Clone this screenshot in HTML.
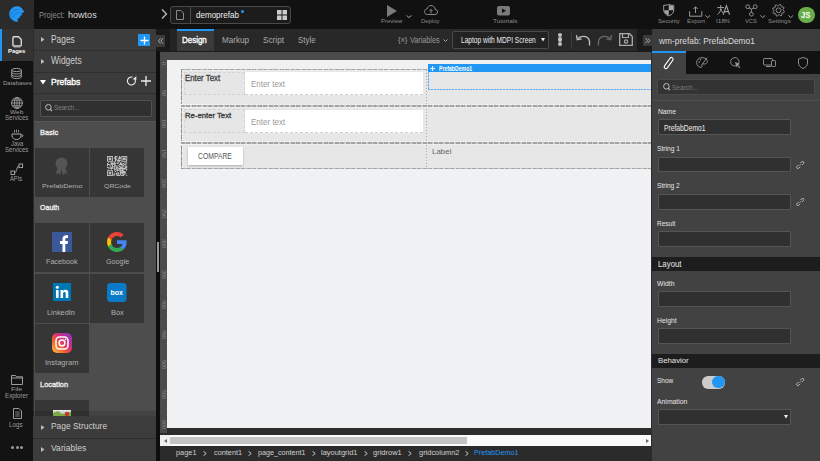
<!DOCTYPE html>
<html><head><meta charset="utf-8">
<style>
*{margin:0;padding:0;box-sizing:border-box}
html,body{width:820px;height:461px;overflow:hidden;background:#2a2a2a;font-family:"Liberation Sans",sans-serif}
.a{position:absolute}
.t{position:absolute;white-space:nowrap;line-height:1;transform-origin:0 0}
svg{position:absolute;overflow:visible}
</style></head><body>
<div class="a" style="left:0px;top:0px;width:820px;height:29px;background:#111;"></div>
<div class="a" style="left:0px;top:0px;width:34px;height:29px;background:#2b2b2b;"></div>
<svg style="left:0;top:0" width="30" height="28" viewBox="0 0 30 28">
  <path d="M17.5 21.9 C12.5 21.6 9.3 18 9.3 14 C9.3 9.5 13 6.3 17 6.3 C20 6.3 22.6 8 24.2 12.2 L21.4 13.2 L22.3 14.9 L19.7 15.9 L20.4 17.2 L17.7 18.7 Z" fill="#2196f3"/>
  <path d="M11 15.5 C11.5 11.5 15 9 19 9.5 M12.5 18 C13.5 14.5 16.5 12.5 19.8 12.8" fill="none" stroke="#1a78c8" stroke-width="0.9"/>
</svg>
<svg style="left:161px;top:9px" width="7" height="10" viewBox="0 0 7 10"><path d="M1 0.5 L5.5 5 L1 9.5" fill="none" stroke="#bbb" stroke-width="1.3"/></svg>
<div class="a" style="left:170px;top:6px;width:121px;height:18px;background:#1c1c1c;border:1px solid #4a4a4a;border-radius:3px"></div>
<div class="a" style="left:190px;top:7px;width:1px;height:16px;background:#4a4a4a;"></div>
<svg style="left:176px;top:10px" width="8" height="10" viewBox="0 0 8 10"><path d="M0.5 0.5 H5 L7.5 3 V9.5 H0.5 Z" fill="none" stroke="#888" stroke-width="1"/></svg>
<div class="a" style="left:241px;top:10px;width:3px;height:3px;background:#2196f3;border-radius:50%"></div>
<svg style="left:277px;top:10px" width="10" height="10" viewBox="0 0 10 10"><rect x="0" y="0" width="4.5" height="4.5" fill="#ccc"/><rect x="5.5" y="0" width="4.5" height="4.5" fill="#ccc"/><rect x="0" y="5.5" width="4.5" height="4.5" fill="#ccc"/><rect x="5.5" y="5.5" width="4.5" height="4.5" fill="#ccc"/></svg>
<svg style="left:387px;top:5px" width="10" height="12" viewBox="0 0 10 12"><path d="M0 0 L10 6 L0 12Z" fill="#7a7a7a"/></svg>
<svg style="left:406px;top:15px" width="6" height="3" viewBox="0 0 6 3"><path d="M0.5 0.5 L3 2.5 L5.5 0.5" fill="none" stroke="#999" stroke-width="1"/></svg>
<svg style="left:424px;top:5px" width="14" height="10" viewBox="0 0 14 10"><path d="M3.5 9.5 C1 9.5 0.5 7.5 0.5 6.5 C0.5 5 1.8 4 3 4 C3.2 2 5 0.5 7 0.5 C9.5 0.5 11 2.5 11 4.3 C12.5 4.3 13.5 5.5 13.5 7 C13.5 8.5 12.5 9.5 11 9.5 Z" fill="none" stroke="#8a8a8a" stroke-width="1"/><path d="M7 8.5 V4.5 M5.5 6 L7 4.5 L8.5 6" fill="none" stroke="#8a8a8a" stroke-width="1"/></svg>
<svg style="left:497px;top:6px" width="13" height="10" viewBox="0 0 13 10"><rect x="0" y="0" width="13" height="9.5" rx="2" fill="#7a7a7a"/><path d="M5 2.5 L9 4.75 L5 7Z" fill="#111"/></svg>
<svg style="left:662.5px;top:4.3px" width="11.5" height="12.5" viewBox="0 0 11.5 12.5"><path d="M0.7 1.2 C2.5 1.5 4 1 5.75 0.5 C7.5 1 9 1.5 10.8 1.2 V6 C10.8 9 8.5 11 5.75 11.9 C3 11 0.7 9 0.7 6Z" fill="none" stroke="#9a9a9a" stroke-width="1"/><path d="M5.75 0.9 C7.5 1.3 9 1.8 10.3 1.7 V6.2 H5.75Z M5.75 6.2 V11.4 C3.3 10.5 1.3 8.8 1.2 6.2Z" fill="#a8a8a8"/></svg>
<svg style="left:689px;top:5.5px" width="13.5" height="11" viewBox="0 0 13.5 11"><path d="M0.6 5.2 V10.2 H12.8 V5.2" fill="none" stroke="#9a9a9a" stroke-width="1"/><path d="M6.5 7 V0.8 M4.3 3 L6.5 0.8 L8.7 3" fill="none" stroke="#9a9a9a" stroke-width="1"/></svg>
<svg style="left:704.5px;top:14.6px" width="5.5" height="3" viewBox="0 0 5.5 3"><path d="M0.4 0.4 L2.75 2.6 L5.1 0.4" fill="none" stroke="#aaa" stroke-width="0.9"/></svg>
<svg style="left:716.8px;top:5.2px" width="13" height="10" viewBox="0 0 13 10"><path d="M0.3 2.6 H7 M3.7 0 V3.5 C3.7 6 2.5 8 0.5 9.5 M3.9 4 C4.8 6.5 5.6 7.8 7 9" fill="none" stroke="#a0a0a0" stroke-width="1"/><path d="M6.2 9.8 L9.4 0.6 L12.6 9.8 M7.5 6.6 H11.3" fill="none" stroke="#a0a0a0" stroke-width="1.1"/></svg>
<svg style="left:744.5px;top:3.8px" width="13" height="13" viewBox="0 0 13 13"><circle cx="2.7" cy="2.7" r="1.9" fill="none" stroke="#9a9a9a" stroke-width="0.9"/><circle cx="10.2" cy="2.7" r="1.9" fill="none" stroke="#9a9a9a" stroke-width="0.9"/><circle cx="6.4" cy="10.2" r="1.9" fill="none" stroke="#9a9a9a" stroke-width="0.9"/><path d="M4 4 L6.4 5.1 L8.9 4 M6.4 5.1 V8.3" fill="none" stroke="#9a9a9a" stroke-width="0.9"/></svg>
<svg style="left:759.8px;top:14.7px" width="5.5" height="3" viewBox="0 0 5.5 3"><path d="M0.4 0.4 L2.75 2.6 L5.1 0.4" fill="none" stroke="#aaa" stroke-width="0.9"/></svg>
<svg style="left:772.1px;top:3.9px" width="13" height="12.6" viewBox="0 0 13 12.6"><path d="M11.10 6.30 L12.38 7.47 L12.04 8.60 L10.32 8.86 L9.75 9.55 L9.83 11.29 L8.80 11.84 L7.40 10.81 L6.50 10.90 L5.33 12.18 L4.20 11.84 L3.94 10.12 L3.25 9.55 L1.51 9.63 L0.96 8.60 L1.99 7.20 L1.90 6.30 L0.62 5.13 L0.96 4.00 L2.68 3.74 L3.25 3.05 L3.17 1.31 L4.20 0.76 L5.60 1.79 L6.50 1.70 L7.67 0.42 L8.80 0.76 L9.06 2.48 L9.75 3.05 L11.49 2.97 L12.04 4.00 L11.01 5.40 Z" fill="none" stroke="#9a9a9a" stroke-width="0.9" stroke-linejoin="round"/><circle cx="6.5" cy="6.3" r="2.4" fill="none" stroke="#9a9a9a" stroke-width="0.9"/></svg>
<svg style="left:787.5px;top:14.7px" width="5.5" height="3" viewBox="0 0 5.5 3"><path d="M0.4 0.4 L2.75 2.6 L5.1 0.4" fill="none" stroke="#aaa" stroke-width="0.9"/></svg>
<div class="a" style="left:798.3px;top:6.5px;width:16.5px;height:16.5px;background:#68ad47;border-radius:50%"></div>
<div class="a" style="left:0px;top:29px;width:33px;height:432px;background:#131313;"></div>
<div class="a" style="left:0px;top:29px;width:33px;height:32px;background:#333;"></div>
<div class="a" style="left:0px;top:29px;width:2px;height:32px;background:#2196f3;"></div>
<div class="a" style="left:33px;top:29px;width:123px;height:432px;background:#4d4d4d;"></div>
<div class="a" style="left:33px;top:29px;width:123px;height:92px;background:#3b3b3b;"></div>
<div class="a" style="left:33px;top:50px;width:123px;height:1px;background:#2f2f2f;"></div>
<div class="a" style="left:33px;top:72px;width:123px;height:1px;background:#2f2f2f;"></div>
<div class="a" style="left:33px;top:93px;width:123px;height:1px;background:#2f2f2f;"></div>
<div class="a" style="left:33px;top:121px;width:123px;height:1px;background:#555;"></div>
<div class="a" style="left:156px;top:51px;width:4px;height:410px;background:#0e0e0e;"></div>
<div class="a" style="left:33px;top:29px;width:1px;height:386.6px;background:#2c2c2c;"></div>
<div class="a" style="left:156px;top:29px;width:496px;height:22px;background:#282828;"></div>
<div class="a" style="left:156px;top:29px;width:14px;height:22px;background:#1a1a1a;"></div>
<div class="a" style="left:170px;top:29px;width:7px;height:22px;background:#242424;"></div>
<div class="a" style="left:177px;top:29px;width:37px;height:22px;background:#3a3a3a;border-top:2px solid #2196f3"></div>
<div class="t" style="left:398px;top:35.5px;font-size:8px;color:#999">{x}</div>
<svg style="left:443px;top:39px" width="5" height="3" viewBox="0 0 5 3"><path d="M0.5 0.5 L2.5 2.5 L4.5 0.5" fill="none" stroke="#aaa" stroke-width="1"/></svg>
<div class="a" style="left:452px;top:31px;width:97px;height:18px;background:#222222;border:1px solid #4a4a4a;border-radius:2px"></div>
<svg style="left:541px;top:38px" width="4" height="4" viewBox="0 0 4 4"><path d="M0 0 H4 L2 3.6Z" fill="#eee"/></svg>
<div class="a" style="left:558px;top:33px;width:4.3px;height:4.3px;background:#c0c0c0;border-radius:50%"></div>
<div class="a" style="left:558px;top:37.3px;width:4.3px;height:4.3px;background:#c0c0c0;border-radius:50%"></div>
<div class="a" style="left:558px;top:41.6px;width:4.3px;height:4.3px;background:#c0c0c0;border-radius:50%"></div>
<div class="a" style="left:570.7px;top:31px;width:1px;height:18px;background:#3c3c3c;"></div>
<svg style="left:576px;top:34px" width="15" height="12" viewBox="0 0 15 12"><path d="M2 4.5 C5 1.5 11 1.5 13 5.5 C13.8 7.5 13.8 9.5 13.5 11.5" fill="none" stroke="#bbb" stroke-width="1.4"/><path d="M1 1 V5.5 H5.5" fill="none" stroke="#bbb" stroke-width="1.4" transform="rotate(-10 2 4)"/></svg>
<svg style="left:597px;top:34px" width="15" height="12" viewBox="0 0 15 12"><path d="M13 4.5 C10 1.5 4 1.5 2 5.5 C1.2 7.5 1.2 9.5 1.5 11.5" fill="none" stroke="#666" stroke-width="1.4"/><path d="M14 1 V5.5 H9.5" fill="none" stroke="#666" stroke-width="1.4" transform="rotate(10 13 4)"/></svg>
<svg style="left:619px;top:33px" width="14" height="13" viewBox="0 0 14 13"><path d="M0.7 0.7 H10.5 L13.3 3.5 V12.3 H0.7Z" fill="none" stroke="#aaa" stroke-width="1.3"/><path d="M3.5 0.7 V4.5 H9.5 V0.7" fill="none" stroke="#aaa" stroke-width="1.2"/><circle cx="7" cy="8.5" r="1.6" fill="none" stroke="#aaa" stroke-width="1.2"/></svg>
<div class="a" style="left:637px;top:29px;width:15px;height:22px;background:#1a1a1a;"></div>
<div class="a" style="left:642.8px;top:35px;width:9.5px;height:10.9px;background:#3a3a3a;"></div>
<svg style="left:645px;top:37.8px" width="5.5" height="5.4" viewBox="0 0 5.5 5.4"><path d="M0.4 0.3 L2.6 2.7 L0.4 5.1 M2.8 0.3 L5 2.7 L2.8 5.1" fill="none" stroke="#b0b0b0" stroke-width="0.9"/></svg>
<div class="a" style="left:160px;top:51px;width:492px;height:395px;background:#2c2c2c;"></div>
<div class="a" style="left:160px;top:51px;width:492px;height:1px;background:#1c1c1c;"></div>
<div class="a" style="left:160px;top:52px;width:491px;height:8px;background:#4b4b4b;"></div>
<div class="a" style="left:160px;top:52px;width:7px;height:381px;background:#4b4b4b;"></div>
<div class="a" style="left:167px;top:60px;width:484px;height:368px;background:#f0f1f2;"></div>
<div class="a" style="left:652px;top:29px;width:168px;height:432px;background:#424242;"></div>
<div class="a" style="left:156px;top:35px;width:8.9px;height:11.8px;background:#3a3a3a;"></div>
<svg style="left:157.6px;top:37.7px" width="5.5" height="6" viewBox="0 0 5.5 6"><path d="M2.6 0.3 L0.4 3 L2.6 5.7 M5.1 0.3 L2.9 3 L5.1 5.7" fill="none" stroke="#b0b0b0" stroke-width="0.9"/></svg>
<svg style="left:11.8px;top:36.2px" width="10.2" height="11.5" viewBox="0 0 10.2 11.5"><path d="M2 0.8 H6.5 L9.3 3.6 V9 C9.3 9.6 8.9 10 8.3 10 H2 C1.4 10 0.9 9.6 0.9 9 V1.9 C0.9 1.3 1.4 0.8 2 0.8Z" fill="none" stroke="#d8d8d8" stroke-width="1.4"/><path d="M1.8 11 H8.5" stroke="#bbb" stroke-width="0.9"/></svg>
<svg style="left:11px;top:68px" width="11" height="11" viewBox="0 0 11 11"><ellipse cx="5.5" cy="2" rx="4.8" ry="1.6" fill="none" stroke="#ababab" stroke-width="0.9"/><path d="M0.7 2 V9 C0.7 10 3 10.6 5.5 10.6 C8 10.6 10.3 10 10.3 9 V2 M0.7 4.4 C0.7 5.4 3 6 5.5 6 C8 6 10.3 5.4 10.3 4.4 M0.7 6.8 C0.7 7.8 3 8.4 5.5 8.4 C8 8.4 10.3 7.8 10.3 6.8" fill="none" stroke="#ababab" stroke-width="0.9"/></svg>
<svg style="left:11px;top:96.5px" width="12" height="12" viewBox="0 0 12 12"><circle cx="6" cy="6" r="5.4" fill="none" stroke="#ababab" stroke-width="0.9"/><ellipse cx="6" cy="6" rx="2.5" ry="5.4" fill="none" stroke="#ababab" stroke-width="0.8"/><path d="M0.6 6 H11.4 M1.5 3.2 H10.5 M1.5 8.8 H10.5 M6 0.6 V11.4" stroke="#ababab" stroke-width="0.8"/></svg>
<svg style="left:10.5px;top:129px" width="13" height="11" viewBox="0 0 13 11"><path d="M1 5 H10 V6.5 C10 9 8 10.5 5.5 10.5 C3 10.5 1 9 1 6.5Z" fill="none" stroke="#ababab" stroke-width="1"/><path d="M10 5.8 H11.3 C12.2 5.8 12.3 7.8 10.5 8" fill="none" stroke="#ababab" stroke-width="0.9"/><path d="M3.5 3.5 V1 M5.5 3.5 V0.5 M7.5 3.5 V1" stroke="#ababab" stroke-width="0.8"/></svg>
<svg style="left:0px;top:160px" width="34" height="20" viewBox="0 160 34 20"><rect x="11" y="171" width="3.6" height="3.6" fill="none" stroke="#ababab" stroke-width="0.9"/><rect x="19" y="164" width="3.6" height="3.6" fill="none" stroke="#ababab" stroke-width="0.9"/><path d="M14.6 172.8 C16.8 172.8 16.8 165.8 19 165.8" fill="none" stroke="#ababab" stroke-width="0.9"/></svg>
<svg style="left:11px;top:375px" width="12" height="10" viewBox="0 0 12 10"><path d="M0.5 0.5 H4.5 L5.5 1.8 H11.5 V9.5 H0.5Z M0.5 3 H11.5" fill="none" stroke="#ababab" stroke-width="0.9"/></svg>
<svg style="left:12.5px;top:408px" width="9" height="11" viewBox="0 0 9 11"><path d="M0.5 0.5 H6 L8.5 3 V10.5 H0.5Z" fill="none" stroke="#ababab" stroke-width="0.9"/><path d="M2.2 4 H6.8 M2.2 6 H6.8 M2.2 8 H6.8" stroke="#ababab" stroke-width="0.7"/></svg>
<div class="a" style="left:11px;top:446.2px;width:3px;height:3px;background:#9a9a9a;border-radius:50%"></div>
<div class="a" style="left:15.5px;top:446.2px;width:3px;height:3px;background:#9a9a9a;border-radius:50%"></div>
<div class="a" style="left:20px;top:446.2px;width:3px;height:3px;background:#9a9a9a;border-radius:50%"></div>
<svg style="left:41px;top:36.5px" width="4" height="5" viewBox="0 0 4 5"><path d="M0 0 L3.5 2.5 L0 5Z" fill="#bbb"/></svg>
<svg style="left:41px;top:58.5px" width="4" height="5" viewBox="0 0 4 5"><path d="M0 0 L3.5 2.5 L0 5Z" fill="#bbb"/></svg>
<svg style="left:40px;top:80px" width="6" height="5" viewBox="0 0 6 5"><path d="M0 0 H6 L3 4.5Z" fill="#fff"/></svg>
<div class="a" style="left:137.6px;top:33.8px;width:12.4px;height:12.4px;background:#2196f3;"></div>
<svg style="left:139.5px;top:35.7px" width="9" height="9" viewBox="0 0 9 9"><path d="M4.5 0.5 V8.5 M0.5 4.5 H8.5" stroke="#fff" stroke-width="1.3"/></svg>
<svg style="left:120px;top:70px" width="36" height="20" viewBox="120 70 36 20"><path d="M135.16 79.63 A4 4 0 1 1 132.44 77.14" fill="none" stroke="#eee" stroke-width="1.1"/><path d="M132.6 79.3 L136.3 76.2 L136.3 80Z" fill="#eee"/></svg>
<svg style="left:141px;top:76.3px" width="10" height="10" viewBox="0 0 10 10"><path d="M5 0 V10 M0 5 H10" stroke="#eee" stroke-width="1.3"/></svg>
<div class="a" style="left:39.5px;top:99.5px;width:112.5px;height:17.2px;background:#303030;border:1px solid #525252;border-radius:2px"></div>
<svg style="left:44.6px;top:104.2px" width="8" height="7.5" viewBox="0 0 8 7.5"><circle cx="3.4" cy="3.3" r="2.8" fill="none" stroke="#c0c0c0" stroke-width="1"/><path d="M5.3 5.3 L7 7" stroke="#c0c0c0" stroke-width="1.1"/></svg>
<div class="a" style="left:35px;top:148px;width:54px;height:49px;background:#363636;"></div>
<div class="a" style="left:90.3px;top:148px;width:53.7px;height:49px;background:#363636;"></div>
<div class="a" style="left:35px;top:223.2px;width:54px;height:49.3px;background:#363636;"></div>
<div class="a" style="left:90.3px;top:223.2px;width:53.7px;height:49.3px;background:#363636;"></div>
<div class="a" style="left:35px;top:273.6px;width:54px;height:49px;background:#363636;"></div>
<div class="a" style="left:90.3px;top:273.6px;width:53.7px;height:49px;background:#363636;"></div>
<div class="a" style="left:35px;top:323.8px;width:54px;height:49.2px;background:#363636;"></div>
<div class="a" style="left:35px;top:400px;width:54px;height:16px;background:#363636;"></div>
<svg style="left:54px;top:157px" width="15" height="19" viewBox="0 0 15 19"><path d="M4 10 L1.5 17 L4.5 16 L6 18.5 L7.5 12 M11 10 L13.5 17 L10.5 16 L9 18.5 L7.5 12" fill="#555"/><circle cx="7.5" cy="6.5" r="6" fill="#555"/></svg>
<svg style="left:106.6px;top:156px" width="20.3" height="20" viewBox="0 0 25 25"><g fill="#f2f2f2"><rect x="0" y="0" width="1.02" height="1.02"/><rect x="1" y="0" width="1.02" height="1.02"/><rect x="2" y="0" width="1.02" height="1.02"/><rect x="3" y="0" width="1.02" height="1.02"/><rect x="4" y="0" width="1.02" height="1.02"/><rect x="5" y="0" width="1.02" height="1.02"/><rect x="6" y="0" width="1.02" height="1.02"/><rect x="10" y="0" width="1.02" height="1.02"/><rect x="11" y="0" width="1.02" height="1.02"/><rect x="12" y="0" width="1.02" height="1.02"/><rect x="15" y="0" width="1.02" height="1.02"/><rect x="18" y="0" width="1.02" height="1.02"/><rect x="19" y="0" width="1.02" height="1.02"/><rect x="20" y="0" width="1.02" height="1.02"/><rect x="21" y="0" width="1.02" height="1.02"/><rect x="22" y="0" width="1.02" height="1.02"/><rect x="23" y="0" width="1.02" height="1.02"/><rect x="24" y="0" width="1.02" height="1.02"/><rect x="0" y="1" width="1.02" height="1.02"/><rect x="6" y="1" width="1.02" height="1.02"/><rect x="9" y="1" width="1.02" height="1.02"/><rect x="10" y="1" width="1.02" height="1.02"/><rect x="15" y="1" width="1.02" height="1.02"/><rect x="16" y="1" width="1.02" height="1.02"/><rect x="18" y="1" width="1.02" height="1.02"/><rect x="24" y="1" width="1.02" height="1.02"/><rect x="0" y="2" width="1.02" height="1.02"/><rect x="2" y="2" width="1.02" height="1.02"/><rect x="3" y="2" width="1.02" height="1.02"/><rect x="4" y="2" width="1.02" height="1.02"/><rect x="6" y="2" width="1.02" height="1.02"/><rect x="9" y="2" width="1.02" height="1.02"/><rect x="10" y="2" width="1.02" height="1.02"/><rect x="11" y="2" width="1.02" height="1.02"/><rect x="14" y="2" width="1.02" height="1.02"/><rect x="15" y="2" width="1.02" height="1.02"/><rect x="16" y="2" width="1.02" height="1.02"/><rect x="18" y="2" width="1.02" height="1.02"/><rect x="20" y="2" width="1.02" height="1.02"/><rect x="21" y="2" width="1.02" height="1.02"/><rect x="22" y="2" width="1.02" height="1.02"/><rect x="24" y="2" width="1.02" height="1.02"/><rect x="0" y="3" width="1.02" height="1.02"/><rect x="2" y="3" width="1.02" height="1.02"/><rect x="3" y="3" width="1.02" height="1.02"/><rect x="4" y="3" width="1.02" height="1.02"/><rect x="6" y="3" width="1.02" height="1.02"/><rect x="9" y="3" width="1.02" height="1.02"/><rect x="10" y="3" width="1.02" height="1.02"/><rect x="13" y="3" width="1.02" height="1.02"/><rect x="15" y="3" width="1.02" height="1.02"/><rect x="16" y="3" width="1.02" height="1.02"/><rect x="18" y="3" width="1.02" height="1.02"/><rect x="20" y="3" width="1.02" height="1.02"/><rect x="21" y="3" width="1.02" height="1.02"/><rect x="22" y="3" width="1.02" height="1.02"/><rect x="24" y="3" width="1.02" height="1.02"/><rect x="0" y="4" width="1.02" height="1.02"/><rect x="2" y="4" width="1.02" height="1.02"/><rect x="3" y="4" width="1.02" height="1.02"/><rect x="4" y="4" width="1.02" height="1.02"/><rect x="6" y="4" width="1.02" height="1.02"/><rect x="10" y="4" width="1.02" height="1.02"/><rect x="11" y="4" width="1.02" height="1.02"/><rect x="14" y="4" width="1.02" height="1.02"/><rect x="18" y="4" width="1.02" height="1.02"/><rect x="20" y="4" width="1.02" height="1.02"/><rect x="21" y="4" width="1.02" height="1.02"/><rect x="22" y="4" width="1.02" height="1.02"/><rect x="24" y="4" width="1.02" height="1.02"/><rect x="0" y="5" width="1.02" height="1.02"/><rect x="6" y="5" width="1.02" height="1.02"/><rect x="10" y="5" width="1.02" height="1.02"/><rect x="12" y="5" width="1.02" height="1.02"/><rect x="13" y="5" width="1.02" height="1.02"/><rect x="14" y="5" width="1.02" height="1.02"/><rect x="15" y="5" width="1.02" height="1.02"/><rect x="16" y="5" width="1.02" height="1.02"/><rect x="18" y="5" width="1.02" height="1.02"/><rect x="24" y="5" width="1.02" height="1.02"/><rect x="0" y="6" width="1.02" height="1.02"/><rect x="1" y="6" width="1.02" height="1.02"/><rect x="2" y="6" width="1.02" height="1.02"/><rect x="3" y="6" width="1.02" height="1.02"/><rect x="4" y="6" width="1.02" height="1.02"/><rect x="5" y="6" width="1.02" height="1.02"/><rect x="6" y="6" width="1.02" height="1.02"/><rect x="8" y="6" width="1.02" height="1.02"/><rect x="10" y="6" width="1.02" height="1.02"/><rect x="12" y="6" width="1.02" height="1.02"/><rect x="14" y="6" width="1.02" height="1.02"/><rect x="15" y="6" width="1.02" height="1.02"/><rect x="18" y="6" width="1.02" height="1.02"/><rect x="19" y="6" width="1.02" height="1.02"/><rect x="20" y="6" width="1.02" height="1.02"/><rect x="21" y="6" width="1.02" height="1.02"/><rect x="22" y="6" width="1.02" height="1.02"/><rect x="23" y="6" width="1.02" height="1.02"/><rect x="24" y="6" width="1.02" height="1.02"/><rect x="9" y="7" width="1.02" height="1.02"/><rect x="14" y="7" width="1.02" height="1.02"/><rect x="1" y="8" width="1.02" height="1.02"/><rect x="4" y="8" width="1.02" height="1.02"/><rect x="5" y="8" width="1.02" height="1.02"/><rect x="6" y="8" width="1.02" height="1.02"/><rect x="8" y="8" width="1.02" height="1.02"/><rect x="9" y="8" width="1.02" height="1.02"/><rect x="12" y="8" width="1.02" height="1.02"/><rect x="14" y="8" width="1.02" height="1.02"/><rect x="16" y="8" width="1.02" height="1.02"/><rect x="17" y="8" width="1.02" height="1.02"/><rect x="21" y="8" width="1.02" height="1.02"/><rect x="23" y="8" width="1.02" height="1.02"/><rect x="24" y="8" width="1.02" height="1.02"/><rect x="0" y="9" width="1.02" height="1.02"/><rect x="5" y="9" width="1.02" height="1.02"/><rect x="6" y="9" width="1.02" height="1.02"/><rect x="7" y="9" width="1.02" height="1.02"/><rect x="8" y="9" width="1.02" height="1.02"/><rect x="9" y="9" width="1.02" height="1.02"/><rect x="10" y="9" width="1.02" height="1.02"/><rect x="12" y="9" width="1.02" height="1.02"/><rect x="13" y="9" width="1.02" height="1.02"/><rect x="16" y="9" width="1.02" height="1.02"/><rect x="17" y="9" width="1.02" height="1.02"/><rect x="18" y="9" width="1.02" height="1.02"/><rect x="20" y="9" width="1.02" height="1.02"/><rect x="23" y="9" width="1.02" height="1.02"/><rect x="0" y="10" width="1.02" height="1.02"/><rect x="1" y="10" width="1.02" height="1.02"/><rect x="2" y="10" width="1.02" height="1.02"/><rect x="3" y="10" width="1.02" height="1.02"/><rect x="5" y="10" width="1.02" height="1.02"/><rect x="6" y="10" width="1.02" height="1.02"/><rect x="7" y="10" width="1.02" height="1.02"/><rect x="9" y="10" width="1.02" height="1.02"/><rect x="15" y="10" width="1.02" height="1.02"/><rect x="16" y="10" width="1.02" height="1.02"/><rect x="17" y="10" width="1.02" height="1.02"/><rect x="18" y="10" width="1.02" height="1.02"/><rect x="19" y="10" width="1.02" height="1.02"/><rect x="21" y="10" width="1.02" height="1.02"/><rect x="22" y="10" width="1.02" height="1.02"/><rect x="23" y="10" width="1.02" height="1.02"/><rect x="0" y="11" width="1.02" height="1.02"/><rect x="3" y="11" width="1.02" height="1.02"/><rect x="6" y="11" width="1.02" height="1.02"/><rect x="9" y="11" width="1.02" height="1.02"/><rect x="10" y="11" width="1.02" height="1.02"/><rect x="13" y="11" width="1.02" height="1.02"/><rect x="18" y="11" width="1.02" height="1.02"/><rect x="20" y="11" width="1.02" height="1.02"/><rect x="0" y="12" width="1.02" height="1.02"/><rect x="4" y="12" width="1.02" height="1.02"/><rect x="6" y="12" width="1.02" height="1.02"/><rect x="9" y="12" width="1.02" height="1.02"/><rect x="10" y="12" width="1.02" height="1.02"/><rect x="11" y="12" width="1.02" height="1.02"/><rect x="14" y="12" width="1.02" height="1.02"/><rect x="15" y="12" width="1.02" height="1.02"/><rect x="17" y="12" width="1.02" height="1.02"/><rect x="19" y="12" width="1.02" height="1.02"/><rect x="20" y="12" width="1.02" height="1.02"/><rect x="22" y="12" width="1.02" height="1.02"/><rect x="23" y="12" width="1.02" height="1.02"/><rect x="24" y="12" width="1.02" height="1.02"/><rect x="4" y="13" width="1.02" height="1.02"/><rect x="6" y="13" width="1.02" height="1.02"/><rect x="7" y="13" width="1.02" height="1.02"/><rect x="8" y="13" width="1.02" height="1.02"/><rect x="9" y="13" width="1.02" height="1.02"/><rect x="12" y="13" width="1.02" height="1.02"/><rect x="15" y="13" width="1.02" height="1.02"/><rect x="16" y="13" width="1.02" height="1.02"/><rect x="19" y="13" width="1.02" height="1.02"/><rect x="22" y="13" width="1.02" height="1.02"/><rect x="24" y="13" width="1.02" height="1.02"/><rect x="0" y="14" width="1.02" height="1.02"/><rect x="1" y="14" width="1.02" height="1.02"/><rect x="3" y="14" width="1.02" height="1.02"/><rect x="5" y="14" width="1.02" height="1.02"/><rect x="6" y="14" width="1.02" height="1.02"/><rect x="9" y="14" width="1.02" height="1.02"/><rect x="11" y="14" width="1.02" height="1.02"/><rect x="12" y="14" width="1.02" height="1.02"/><rect x="13" y="14" width="1.02" height="1.02"/><rect x="16" y="14" width="1.02" height="1.02"/><rect x="17" y="14" width="1.02" height="1.02"/><rect x="18" y="14" width="1.02" height="1.02"/><rect x="19" y="14" width="1.02" height="1.02"/><rect x="22" y="14" width="1.02" height="1.02"/><rect x="23" y="14" width="1.02" height="1.02"/><rect x="24" y="14" width="1.02" height="1.02"/><rect x="2" y="15" width="1.02" height="1.02"/><rect x="4" y="15" width="1.02" height="1.02"/><rect x="5" y="15" width="1.02" height="1.02"/><rect x="6" y="15" width="1.02" height="1.02"/><rect x="8" y="15" width="1.02" height="1.02"/><rect x="9" y="15" width="1.02" height="1.02"/><rect x="11" y="15" width="1.02" height="1.02"/><rect x="13" y="15" width="1.02" height="1.02"/><rect x="14" y="15" width="1.02" height="1.02"/><rect x="15" y="15" width="1.02" height="1.02"/><rect x="16" y="15" width="1.02" height="1.02"/><rect x="17" y="15" width="1.02" height="1.02"/><rect x="18" y="15" width="1.02" height="1.02"/><rect x="19" y="15" width="1.02" height="1.02"/><rect x="20" y="15" width="1.02" height="1.02"/><rect x="21" y="15" width="1.02" height="1.02"/><rect x="22" y="15" width="1.02" height="1.02"/><rect x="23" y="15" width="1.02" height="1.02"/><rect x="1" y="16" width="1.02" height="1.02"/><rect x="5" y="16" width="1.02" height="1.02"/><rect x="9" y="16" width="1.02" height="1.02"/><rect x="10" y="16" width="1.02" height="1.02"/><rect x="12" y="16" width="1.02" height="1.02"/><rect x="15" y="16" width="1.02" height="1.02"/><rect x="16" y="16" width="1.02" height="1.02"/><rect x="18" y="16" width="1.02" height="1.02"/><rect x="19" y="16" width="1.02" height="1.02"/><rect x="21" y="16" width="1.02" height="1.02"/><rect x="23" y="16" width="1.02" height="1.02"/><rect x="24" y="16" width="1.02" height="1.02"/><rect x="9" y="17" width="1.02" height="1.02"/><rect x="11" y="17" width="1.02" height="1.02"/><rect x="12" y="17" width="1.02" height="1.02"/><rect x="13" y="17" width="1.02" height="1.02"/><rect x="14" y="17" width="1.02" height="1.02"/><rect x="16" y="17" width="1.02" height="1.02"/><rect x="18" y="17" width="1.02" height="1.02"/><rect x="19" y="17" width="1.02" height="1.02"/><rect x="20" y="17" width="1.02" height="1.02"/><rect x="24" y="17" width="1.02" height="1.02"/><rect x="0" y="18" width="1.02" height="1.02"/><rect x="1" y="18" width="1.02" height="1.02"/><rect x="2" y="18" width="1.02" height="1.02"/><rect x="3" y="18" width="1.02" height="1.02"/><rect x="4" y="18" width="1.02" height="1.02"/><rect x="5" y="18" width="1.02" height="1.02"/><rect x="6" y="18" width="1.02" height="1.02"/><rect x="9" y="18" width="1.02" height="1.02"/><rect x="12" y="18" width="1.02" height="1.02"/><rect x="13" y="18" width="1.02" height="1.02"/><rect x="15" y="18" width="1.02" height="1.02"/><rect x="16" y="18" width="1.02" height="1.02"/><rect x="17" y="18" width="1.02" height="1.02"/><rect x="18" y="18" width="1.02" height="1.02"/><rect x="19" y="18" width="1.02" height="1.02"/><rect x="0" y="19" width="1.02" height="1.02"/><rect x="6" y="19" width="1.02" height="1.02"/><rect x="10" y="19" width="1.02" height="1.02"/><rect x="16" y="19" width="1.02" height="1.02"/><rect x="18" y="19" width="1.02" height="1.02"/><rect x="19" y="19" width="1.02" height="1.02"/><rect x="20" y="19" width="1.02" height="1.02"/><rect x="21" y="19" width="1.02" height="1.02"/><rect x="22" y="19" width="1.02" height="1.02"/><rect x="0" y="20" width="1.02" height="1.02"/><rect x="2" y="20" width="1.02" height="1.02"/><rect x="3" y="20" width="1.02" height="1.02"/><rect x="4" y="20" width="1.02" height="1.02"/><rect x="6" y="20" width="1.02" height="1.02"/><rect x="13" y="20" width="1.02" height="1.02"/><rect x="16" y="20" width="1.02" height="1.02"/><rect x="17" y="20" width="1.02" height="1.02"/><rect x="18" y="20" width="1.02" height="1.02"/><rect x="19" y="20" width="1.02" height="1.02"/><rect x="20" y="20" width="1.02" height="1.02"/><rect x="21" y="20" width="1.02" height="1.02"/><rect x="22" y="20" width="1.02" height="1.02"/><rect x="0" y="21" width="1.02" height="1.02"/><rect x="2" y="21" width="1.02" height="1.02"/><rect x="3" y="21" width="1.02" height="1.02"/><rect x="4" y="21" width="1.02" height="1.02"/><rect x="6" y="21" width="1.02" height="1.02"/><rect x="9" y="21" width="1.02" height="1.02"/><rect x="11" y="21" width="1.02" height="1.02"/><rect x="12" y="21" width="1.02" height="1.02"/><rect x="13" y="21" width="1.02" height="1.02"/><rect x="14" y="21" width="1.02" height="1.02"/><rect x="16" y="21" width="1.02" height="1.02"/><rect x="18" y="21" width="1.02" height="1.02"/><rect x="19" y="21" width="1.02" height="1.02"/><rect x="21" y="21" width="1.02" height="1.02"/><rect x="22" y="21" width="1.02" height="1.02"/><rect x="0" y="22" width="1.02" height="1.02"/><rect x="2" y="22" width="1.02" height="1.02"/><rect x="3" y="22" width="1.02" height="1.02"/><rect x="4" y="22" width="1.02" height="1.02"/><rect x="6" y="22" width="1.02" height="1.02"/><rect x="8" y="22" width="1.02" height="1.02"/><rect x="11" y="22" width="1.02" height="1.02"/><rect x="14" y="22" width="1.02" height="1.02"/><rect x="16" y="22" width="1.02" height="1.02"/><rect x="17" y="22" width="1.02" height="1.02"/><rect x="19" y="22" width="1.02" height="1.02"/><rect x="20" y="22" width="1.02" height="1.02"/><rect x="23" y="22" width="1.02" height="1.02"/><rect x="0" y="23" width="1.02" height="1.02"/><rect x="6" y="23" width="1.02" height="1.02"/><rect x="8" y="23" width="1.02" height="1.02"/><rect x="9" y="23" width="1.02" height="1.02"/><rect x="11" y="23" width="1.02" height="1.02"/><rect x="12" y="23" width="1.02" height="1.02"/><rect x="14" y="23" width="1.02" height="1.02"/><rect x="16" y="23" width="1.02" height="1.02"/><rect x="20" y="23" width="1.02" height="1.02"/><rect x="21" y="23" width="1.02" height="1.02"/><rect x="0" y="24" width="1.02" height="1.02"/><rect x="1" y="24" width="1.02" height="1.02"/><rect x="2" y="24" width="1.02" height="1.02"/><rect x="3" y="24" width="1.02" height="1.02"/><rect x="4" y="24" width="1.02" height="1.02"/><rect x="5" y="24" width="1.02" height="1.02"/><rect x="6" y="24" width="1.02" height="1.02"/><rect x="8" y="24" width="1.02" height="1.02"/><rect x="12" y="24" width="1.02" height="1.02"/><rect x="13" y="24" width="1.02" height="1.02"/><rect x="14" y="24" width="1.02" height="1.02"/><rect x="15" y="24" width="1.02" height="1.02"/><rect x="17" y="24" width="1.02" height="1.02"/><rect x="18" y="24" width="1.02" height="1.02"/><rect x="19" y="24" width="1.02" height="1.02"/><rect x="20" y="24" width="1.02" height="1.02"/><rect x="24" y="24" width="1.02" height="1.02"/></g></svg>
<svg style="left:51.7px;top:232px" width="20" height="20" viewBox="0 0 20 20"><rect width="20" height="20" fill="#3b5998"/><path d="M10.5 20 V12 H8 V9 H10.5 V7 C10.5 4.5 12 3.3 14.2 3.3 C15.2 3.3 16 3.4 16 3.4 V6 H14.7 C13.5 6 13.3 6.6 13.3 7.4 V9 H16 L15.6 12 H13.3 V20Z" fill="#fff"/></svg>
<svg style="left:107px;top:232px" width="20" height="20" viewBox="0 0 20 20"><path d="M19.6 10.2 C19.6 9.5 19.5 8.9 19.4 8.2 H10 V12 H15.4 C15.2 13.3 14.4 14.3 13.3 15 V17.5 H16.5 C18.4 15.8 19.6 13.2 19.6 10.2Z" fill="#4285f4"/><path d="M10 20 C12.7 20 15 19.1 16.5 17.5 L13.3 15 C12.4 15.6 11.3 16 10 16 C7.4 16 5.2 14.2 4.4 11.9 H1.1 V14.5 C2.8 17.8 6.1 20 10 20Z" fill="#34a853"/><path d="M4.4 11.9 C4.2 11.3 4.1 10.6 4.1 10 C4.1 9.4 4.2 8.7 4.4 8.1 V5.5 H1.1 C0.4 6.9 0 8.4 0 10 C0 11.6 0.4 13.1 1.1 14.5Z" fill="#fbbc05"/><path d="M10 4 C11.5 4 12.8 4.5 13.8 5.5 L16.6 2.7 C15 1.1 12.7 0 10 0 C6.1 0 2.8 2.2 1.1 5.5 L4.4 8.1 C5.2 5.8 7.4 4 10 4Z" fill="#ea4335"/></svg>
<svg style="left:52.8px;top:283.3px" width="18" height="18" viewBox="0 0 18 18"><rect width="18" height="18" fill="#0077b5"/><rect x="3" y="7" width="2.6" height="8" fill="#fff"/><circle cx="4.3" cy="4.3" r="1.5" fill="#fff"/><path d="M7.5 7 H10 V8.2 C10.5 7.3 11.5 6.8 12.6 6.8 C14.6 6.8 15.3 8 15.3 10 V15 H12.7 V10.5 C12.7 9.5 12.4 8.9 11.5 8.9 C10.5 8.9 10.1 9.6 10.1 10.6 V15 H7.5Z" fill="#fff"/></svg>
<svg style="left:107px;top:282.7px" width="19.5" height="19" viewBox="0 0 19.5 19"><rect width="19.5" height="19" rx="3.5" fill="#0a7ac7"/><text x="9.75" y="12" font-family="Liberation Sans" font-size="7" font-weight="bold" fill="#fff" text-anchor="middle">box</text></svg>
<svg style="left:51.7px;top:332.5px" width="20" height="20" viewBox="0 0 20 20"><defs><linearGradient id="ig" x1="0" y1="1" x2="1" y2="0"><stop offset="0" stop-color="#fdc33c"/><stop offset="0.35" stop-color="#f2602f"/><stop offset="0.6" stop-color="#d62d79"/><stop offset="1" stop-color="#7b37c9"/></linearGradient></defs><rect width="20" height="20" rx="5" fill="url(#ig)"/><rect x="4" y="4" width="12" height="12" rx="3.5" fill="none" stroke="#fff" stroke-width="1.5"/><circle cx="10" cy="10" r="2.9" fill="none" stroke="#fff" stroke-width="1.5"/><circle cx="13.6" cy="6.4" r="0.8" fill="#fff"/></svg>
<svg style="left:53px;top:409.6px" width="18" height="6" viewBox="0 0 18 6"><rect width="18" height="6" fill="#eee"/><path d="M0 3 L5 1 L9 4 L18 2 V6 H0Z" fill="#8bc34a"/><circle cx="14" cy="4" r="2.2" fill="#e53935"/></svg>
<div class="a" style="left:33px;top:411px;width:123px;height:5px;background:rgba(0,0,0,0.12);"></div>
<div class="a" style="left:33px;top:415.6px;width:123px;height:45.4px;background:#3c3c3c;"></div>
<div class="a" style="left:33px;top:438px;width:123px;height:1px;background:#2c2c2c;"></div>
<svg style="left:41px;top:425px" width="4" height="5" viewBox="0 0 4 5"><path d="M0 0 L3.5 2.5 L0 5Z" fill="#bbb"/></svg>
<svg style="left:41px;top:447px" width="4" height="5" viewBox="0 0 4 5"><path d="M0 0 L3.5 2.5 L0 5Z" fill="#bbb"/></svg>
<div class="a" style="left:156.7px;top:241.6px;width:2.3px;height:30.3px;background:#9a9a9a;"></div>
<div class="a" style="left:181px;top:69px;width:470px;height:100px;background:#e6e7e6;"></div>
<div class="a" style="left:181px;top:69px;width:470px;height:1.2px;background:repeating-linear-gradient(90deg,#a4a4a4 0 3.6px,#cfcfcf 3.6px 5.5px);"></div>
<div class="a" style="left:182px;top:70.3px;width:469px;height:0.9px;background:repeating-linear-gradient(90deg,#fafafa 0 1.5px,transparent 1.5px 3px);"></div>
<div class="a" style="left:181px;top:166.5px;width:470px;height:0.9px;background:repeating-linear-gradient(90deg,#fafafa 0 1.5px,transparent 1.5px 3px);"></div>
<div class="a" style="left:181px;top:167.6px;width:470px;height:1.6px;background:repeating-linear-gradient(90deg,#a4a4a4 0 3.6px,#cfcfcf 3.6px 5.5px);"></div>
<div class="a" style="left:181px;top:69px;width:1.1px;height:100px;background:repeating-linear-gradient(180deg,#8f8f8f 0 3.6px,#bdbdbd 3.6px 5.5px);"></div>
<div class="a" style="left:182.2px;top:70px;width:0.9px;height:99px;background:repeating-linear-gradient(180deg,#fafafa 0 1.5px,transparent 1.5px 3px);"></div>
<div class="a" style="left:181px;top:103.9px;width:470px;height:0.9px;background:repeating-linear-gradient(90deg,#fafafa 0 1.5px,transparent 1.5px 3px);"></div>
<div class="a" style="left:181px;top:105.1px;width:470px;height:1.6px;background:repeating-linear-gradient(90deg,#a4a4a4 0 3.6px,#cfcfcf 3.6px 5.5px);"></div>
<div class="a" style="left:181px;top:107px;width:470px;height:0.9px;background:repeating-linear-gradient(90deg,#fafafa 0 1.5px,transparent 1.5px 3px);"></div>
<div class="a" style="left:181px;top:141.2px;width:470px;height:0.9px;background:repeating-linear-gradient(90deg,#fafafa 0 1.5px,transparent 1.5px 3px);"></div>
<div class="a" style="left:181px;top:142.4px;width:470px;height:1.6px;background:repeating-linear-gradient(90deg,#a4a4a4 0 3.6px,#cfcfcf 3.6px 5.5px);"></div>
<div class="a" style="left:181px;top:144.3px;width:470px;height:0.9px;background:repeating-linear-gradient(90deg,#fafafa 0 1.5px,transparent 1.5px 3px);"></div>
<div class="a" style="left:425.5px;top:70px;width:1px;height:99px;background:repeating-linear-gradient(180deg,#a8a8a8 0 1.5px,transparent 1.5px 3px);"></div>
<div class="a" style="left:183.6px;top:72px;width:61px;height:23.2px;background:#e5e6e5;border:1px dashed #d2d3d2"></div>
<div class="a" style="left:183.6px;top:108.7px;width:61px;height:24px;background:#e5e6e5;border:1px dashed #d2d3d2"></div>
<div class="a" style="left:245px;top:72px;width:178.3px;height:22.8px;background:#ffffff;border-bottom:1px dashed #d0d0d0"></div>
<div class="a" style="left:245px;top:109.6px;width:178.3px;height:23px;background:#ffffff;border-bottom:1px dashed #d0d0d0"></div>
<div class="a" style="left:188px;top:147px;width:55px;height:18.4px;background:#ffffff;box-shadow:0 1px 2px rgba(0,0,0,0.25)"></div>
<div class="a" style="left:427.9px;top:71.8px;width:223.1px;height:18.2px;background:#e6e7e6;"></div>
<div class="a" style="left:427.9px;top:71.8px;width:1px;height:18.2px;background:repeating-linear-gradient(180deg,#62acef 0 2px,#a8d0f2 2px 3px);"></div>
<div class="a" style="left:427.9px;top:89px;width:223.1px;height:1px;background:repeating-linear-gradient(90deg,#62acef 0 2px,#b8d8f2 2px 3px);"></div>
<div class="a" style="left:427.9px;top:64.1px;width:223.1px;height:7.7px;background:#2196f3;"></div>
<svg style="left:429.9px;top:65.9px" width="5.2" height="5.2" viewBox="0 0 10 10"><path d="M5 0 L7 2.2 H5.8 V4.2 H7.8 V3 L10 5 L7.8 7 V5.8 H5.8 V7.8 H7 L5 10 L3 7.8 H4.2 V5.8 H2.2 V7 L0 5 L2.2 3 V4.2 H4.2 V2.2 H3Z" fill="#fff"/></svg>
<div class="t" style="left:160.5px;top:61.6px;font-size:5.5px;color:#8c8c8c;transform:rotate(90deg);transform-origin:2.5px 2.5px">0</div>
<div class="t" style="left:160.5px;top:90.3px;font-size:5.5px;color:#8c8c8c;transform:rotate(90deg);transform-origin:2.5px 2.5px">50</div>
<div class="t" style="left:160.5px;top:119.0px;font-size:5.5px;color:#8c8c8c;transform:rotate(90deg);transform-origin:2.5px 2.5px">100</div>
<div class="t" style="left:160.5px;top:149.1px;font-size:5.5px;color:#8c8c8c;transform:rotate(90deg);transform-origin:2.5px 2.5px">150</div>
<div class="t" style="left:160.5px;top:179.2px;font-size:5.5px;color:#8c8c8c;transform:rotate(90deg);transform-origin:2.5px 2.5px">200</div>
<div class="t" style="left:160.5px;top:209.3px;font-size:5.5px;color:#8c8c8c;transform:rotate(90deg);transform-origin:2.5px 2.5px">250</div>
<div class="t" style="left:160.5px;top:239.4px;font-size:5.5px;color:#8c8c8c;transform:rotate(90deg);transform-origin:2.5px 2.5px">300</div>
<div class="t" style="left:160.5px;top:269.5px;font-size:5.5px;color:#8c8c8c;transform:rotate(90deg);transform-origin:2.5px 2.5px">350</div>
<div class="t" style="left:160.5px;top:299.6px;font-size:5.5px;color:#8c8c8c;transform:rotate(90deg);transform-origin:2.5px 2.5px">400</div>
<div class="t" style="left:160.5px;top:329.7px;font-size:5.5px;color:#8c8c8c;transform:rotate(90deg);transform-origin:2.5px 2.5px">450</div>
<div class="t" style="left:160.5px;top:359.8px;font-size:5.5px;color:#8c8c8c;transform:rotate(90deg);transform-origin:2.5px 2.5px">500</div>
<div class="t" style="left:160.5px;top:389.9px;font-size:5.5px;color:#8c8c8c;transform:rotate(90deg);transform-origin:2.5px 2.5px">550</div>
<div class="t" style="left:160.5px;top:420.0px;font-size:5.5px;color:#8c8c8c;transform:rotate(90deg);transform-origin:2.5px 2.5px">600</div>
<div class="a" style="left:165.5px;top:60.0px;width:1.2px;height:0.7px;background:#5e5e5e;"></div>
<div class="a" style="left:165.5px;top:66.02px;width:1.2px;height:0.7px;background:#5e5e5e;"></div>
<div class="a" style="left:165.5px;top:72.03999999999999px;width:1.2px;height:0.7px;background:#5e5e5e;"></div>
<div class="a" style="left:165.5px;top:78.06px;width:1.2px;height:0.7px;background:#5e5e5e;"></div>
<div class="a" style="left:165.5px;top:84.08px;width:1.2px;height:0.7px;background:#5e5e5e;"></div>
<div class="a" style="left:165.5px;top:90.1px;width:1.2px;height:0.7px;background:#5e5e5e;"></div>
<div class="a" style="left:165.5px;top:96.12px;width:1.2px;height:0.7px;background:#5e5e5e;"></div>
<div class="a" style="left:165.5px;top:102.14px;width:1.2px;height:0.7px;background:#5e5e5e;"></div>
<div class="a" style="left:165.5px;top:108.16px;width:1.2px;height:0.7px;background:#5e5e5e;"></div>
<div class="a" style="left:165.5px;top:114.17999999999999px;width:1.2px;height:0.7px;background:#5e5e5e;"></div>
<div class="a" style="left:165.5px;top:120.19999999999999px;width:1.2px;height:0.7px;background:#5e5e5e;"></div>
<div class="a" style="left:165.5px;top:126.22px;width:1.2px;height:0.7px;background:#5e5e5e;"></div>
<div class="a" style="left:165.5px;top:132.24px;width:1.2px;height:0.7px;background:#5e5e5e;"></div>
<div class="a" style="left:165.5px;top:138.26px;width:1.2px;height:0.7px;background:#5e5e5e;"></div>
<div class="a" style="left:165.5px;top:144.28px;width:1.2px;height:0.7px;background:#5e5e5e;"></div>
<div class="a" style="left:165.5px;top:150.3px;width:1.2px;height:0.7px;background:#5e5e5e;"></div>
<div class="a" style="left:165.5px;top:156.32px;width:1.2px;height:0.7px;background:#5e5e5e;"></div>
<div class="a" style="left:165.5px;top:162.33999999999997px;width:1.2px;height:0.7px;background:#5e5e5e;"></div>
<div class="a" style="left:165.5px;top:168.35999999999999px;width:1.2px;height:0.7px;background:#5e5e5e;"></div>
<div class="a" style="left:165.5px;top:174.38px;width:1.2px;height:0.7px;background:#5e5e5e;"></div>
<div class="a" style="left:165.5px;top:180.39999999999998px;width:1.2px;height:0.7px;background:#5e5e5e;"></div>
<div class="a" style="left:165.5px;top:186.42px;width:1.2px;height:0.7px;background:#5e5e5e;"></div>
<div class="a" style="left:165.5px;top:192.44px;width:1.2px;height:0.7px;background:#5e5e5e;"></div>
<div class="a" style="left:165.5px;top:198.45999999999998px;width:1.2px;height:0.7px;background:#5e5e5e;"></div>
<div class="a" style="left:165.5px;top:204.48px;width:1.2px;height:0.7px;background:#5e5e5e;"></div>
<div class="a" style="left:165.5px;top:210.5px;width:1.2px;height:0.7px;background:#5e5e5e;"></div>
<div class="a" style="left:165.5px;top:216.51999999999998px;width:1.2px;height:0.7px;background:#5e5e5e;"></div>
<div class="a" style="left:165.5px;top:222.54px;width:1.2px;height:0.7px;background:#5e5e5e;"></div>
<div class="a" style="left:165.5px;top:228.56px;width:1.2px;height:0.7px;background:#5e5e5e;"></div>
<div class="a" style="left:165.5px;top:234.57999999999998px;width:1.2px;height:0.7px;background:#5e5e5e;"></div>
<div class="a" style="left:165.5px;top:240.6px;width:1.2px;height:0.7px;background:#5e5e5e;"></div>
<div class="a" style="left:165.5px;top:246.61999999999998px;width:1.2px;height:0.7px;background:#5e5e5e;"></div>
<div class="a" style="left:165.5px;top:252.64px;width:1.2px;height:0.7px;background:#5e5e5e;"></div>
<div class="a" style="left:165.5px;top:258.65999999999997px;width:1.2px;height:0.7px;background:#5e5e5e;"></div>
<div class="a" style="left:165.5px;top:264.67999999999995px;width:1.2px;height:0.7px;background:#5e5e5e;"></div>
<div class="a" style="left:165.5px;top:270.7px;width:1.2px;height:0.7px;background:#5e5e5e;"></div>
<div class="a" style="left:165.5px;top:276.71999999999997px;width:1.2px;height:0.7px;background:#5e5e5e;"></div>
<div class="a" style="left:165.5px;top:282.74px;width:1.2px;height:0.7px;background:#5e5e5e;"></div>
<div class="a" style="left:165.5px;top:288.76px;width:1.2px;height:0.7px;background:#5e5e5e;"></div>
<div class="a" style="left:165.5px;top:294.78px;width:1.2px;height:0.7px;background:#5e5e5e;"></div>
<div class="a" style="left:165.5px;top:300.79999999999995px;width:1.2px;height:0.7px;background:#5e5e5e;"></div>
<div class="a" style="left:165.5px;top:306.82px;width:1.2px;height:0.7px;background:#5e5e5e;"></div>
<div class="a" style="left:165.5px;top:312.84px;width:1.2px;height:0.7px;background:#5e5e5e;"></div>
<div class="a" style="left:165.5px;top:318.85999999999996px;width:1.2px;height:0.7px;background:#5e5e5e;"></div>
<div class="a" style="left:165.5px;top:324.88px;width:1.2px;height:0.7px;background:#5e5e5e;"></div>
<div class="a" style="left:165.5px;top:330.9px;width:1.2px;height:0.7px;background:#5e5e5e;"></div>
<div class="a" style="left:165.5px;top:336.91999999999996px;width:1.2px;height:0.7px;background:#5e5e5e;"></div>
<div class="a" style="left:165.5px;top:342.94px;width:1.2px;height:0.7px;background:#5e5e5e;"></div>
<div class="a" style="left:165.5px;top:348.96px;width:1.2px;height:0.7px;background:#5e5e5e;"></div>
<div class="a" style="left:165.5px;top:354.97999999999996px;width:1.2px;height:0.7px;background:#5e5e5e;"></div>
<div class="a" style="left:165.5px;top:361.0px;width:1.2px;height:0.7px;background:#5e5e5e;"></div>
<div class="a" style="left:165.5px;top:367.02px;width:1.2px;height:0.7px;background:#5e5e5e;"></div>
<div class="a" style="left:165.5px;top:373.03999999999996px;width:1.2px;height:0.7px;background:#5e5e5e;"></div>
<div class="a" style="left:165.5px;top:379.06px;width:1.2px;height:0.7px;background:#5e5e5e;"></div>
<div class="a" style="left:165.5px;top:385.08px;width:1.2px;height:0.7px;background:#5e5e5e;"></div>
<div class="a" style="left:165.5px;top:391.09999999999997px;width:1.2px;height:0.7px;background:#5e5e5e;"></div>
<div class="a" style="left:165.5px;top:397.12px;width:1.2px;height:0.7px;background:#5e5e5e;"></div>
<div class="a" style="left:165.5px;top:403.14px;width:1.2px;height:0.7px;background:#5e5e5e;"></div>
<div class="a" style="left:165.5px;top:409.15999999999997px;width:1.2px;height:0.7px;background:#5e5e5e;"></div>
<div class="a" style="left:165.5px;top:415.17999999999995px;width:1.2px;height:0.7px;background:#5e5e5e;"></div>
<div class="a" style="left:165.5px;top:421.2px;width:1.2px;height:0.7px;background:#5e5e5e;"></div>
<div class="a" style="left:165.5px;top:427.21999999999997px;width:1.2px;height:0.7px;background:#5e5e5e;"></div>
<div class="a" style="left:160px;top:435.3px;width:491px;height:10.4px;background:#fafafa;"></div>
<div class="a" style="left:160px;top:435.3px;width:10px;height:10.4px;background:#f0f0f0;"></div>
<div class="a" style="left:170.4px;top:436.8px;width:296.2px;height:7.6px;background:#c4c4c4;"></div>
<svg style="left:163.6px;top:438.6px" width="3" height="4" viewBox="0 0 3 4"><path d="M3 0 L0 2 L3 4Z" fill="#666"/></svg>
<svg style="left:645.5px;top:438.6px" width="3" height="4" viewBox="0 0 3 4"><path d="M0 0 L3 2 L0 4Z" fill="#666"/></svg>
<div class="a" style="left:160px;top:446px;width:492px;height:15px;background:#2b2b2b;"></div>
<svg style="left:203.3px;top:450.6px" width="4" height="5" viewBox="0 0 4 5"><path d="M0.5 0.3 L3.2 2.5 L0.5 4.7" fill="none" stroke="#ccc" stroke-width="1"/></svg>
<svg style="left:247.7px;top:450.6px" width="4" height="5" viewBox="0 0 4 5"><path d="M0.5 0.3 L3.2 2.5 L0.5 4.7" fill="none" stroke="#ccc" stroke-width="1"/></svg>
<svg style="left:311.8px;top:450.6px" width="4" height="5" viewBox="0 0 4 5"><path d="M0.5 0.3 L3.2 2.5 L0.5 4.7" fill="none" stroke="#ccc" stroke-width="1"/></svg>
<svg style="left:363.5px;top:450.6px" width="4" height="5" viewBox="0 0 4 5"><path d="M0.5 0.3 L3.2 2.5 L0.5 4.7" fill="none" stroke="#ccc" stroke-width="1"/></svg>
<svg style="left:408px;top:450.6px" width="4" height="5" viewBox="0 0 4 5"><path d="M0.5 0.3 L3.2 2.5 L0.5 4.7" fill="none" stroke="#ccc" stroke-width="1"/></svg>
<svg style="left:465px;top:450.6px" width="4" height="5" viewBox="0 0 4 5"><path d="M0.5 0.3 L3.2 2.5 L0.5 4.7" fill="none" stroke="#ccc" stroke-width="1"/></svg>
<div class="a" style="left:652px;top:29px;width:168px;height:22px;background:#3c3c3c;"></div>
<div class="a" style="left:652px;top:51px;width:168px;height:22.6px;background:#121212;"></div>
<div class="a" style="left:652px;top:51px;width:34px;height:22.6px;background:#424242;border-top:2px solid #2196f3"></div>
<svg style="left:652px;top:51px" width="34" height="23" viewBox="652 51 34 23"><rect x="-1.7" y="-6.4" width="3.4" height="12.8" rx="1.7" fill="none" stroke="#fff" stroke-width="1.1" transform="translate(668.65 63.05) rotate(35.7)"/></svg>
<svg style="left:696px;top:57px" width="12" height="11" viewBox="0 0 12 11"><path d="M6 0.6 C2.5 0.6 0.6 3 0.6 5.5 C0.6 8.5 3 10.4 5 10.4 C6 10.4 6.2 9.5 5.8 8.8 C5.3 8 5.8 7 6.8 7 H8.5 C10 7 11.4 6 11.4 4.5 C11.4 2.2 9 0.6 6 0.6Z" fill="none" stroke="#999" stroke-width="0.9"/><circle cx="3.2" cy="5" r="0.8" fill="#999"/><circle cx="4.5" cy="2.8" r="0.8" fill="#999"/><path d="M11 0.5 L6.5 7" stroke="#999" stroke-width="0.9"/></svg>
<svg style="left:730px;top:56.5px" width="11" height="12" viewBox="0 0 11 12"><circle cx="4.8" cy="4.8" r="4.2" fill="none" stroke="#999" stroke-width="0.9"/><path d="M5 5 L10 7 L8 8 L10.3 10.5 L9.5 11.2 L7.3 8.7 L6.5 10.5Z" fill="#999"/></svg>
<svg style="left:763px;top:58px" width="13" height="9" viewBox="0 0 13 9"><rect x="0.5" y="0.5" width="9" height="6.5" rx="0.8" fill="none" stroke="#999" stroke-width="0.9"/><rect x="8.5" y="2.5" width="4" height="6" rx="0.7" fill="#121212" stroke="#999" stroke-width="0.9"/><path d="M3 8.5 H8" stroke="#999" stroke-width="0.9"/></svg>
<svg style="left:798px;top:56.5px" width="10" height="12" viewBox="0 0 10 12"><path d="M5 0.5 L9.5 2 V6 C9.5 8.5 7.5 10.5 5 11.5 C2.5 10.5 0.5 8.5 0.5 6 V2Z" fill="none" stroke="#999" stroke-width="0.9"/></svg>
<div class="a" style="left:657.3px;top:78.6px;width:157.7px;height:16.6px;background:#333333;border:1px solid #4a4a4a;border-radius:2px"></div>
<svg style="left:662.6px;top:83.2px" width="8" height="7.5" viewBox="0 0 8 7.5"><circle cx="3.4" cy="3.3" r="2.8" fill="none" stroke="#c0c0c0" stroke-width="1"/><path d="M5.3 5.3 L7 7" stroke="#c0c0c0" stroke-width="1.1"/></svg>
<div class="a" style="left:652px;top:100.3px;width:168px;height:1px;background:#4e4e4e;"></div>
<div class="a" style="left:658.3px;top:119.3px;width:132.7px;height:16.2px;background:#303030;border:1px solid #555555;border-radius:1px"></div>
<div class="a" style="left:658.3px;top:156.7px;width:132.7px;height:15.5px;background:#303030;border:1px solid #555555;border-radius:1px"></div>
<div class="a" style="left:658.3px;top:194.2px;width:132.7px;height:16.2px;background:#303030;border:1px solid #555555;border-radius:1px"></div>
<div class="a" style="left:658.3px;top:230.7px;width:132.7px;height:16.6px;background:#303030;border:1px solid #555555;border-radius:1px"></div>
<div class="a" style="left:652px;top:257.3px;width:168px;height:13.5px;background:#1d1d1d;"></div>
<div class="a" style="left:658.3px;top:291px;width:132.7px;height:16px;background:#303030;border:1px solid #555555;border-radius:1px"></div>
<div class="a" style="left:658.3px;top:328.4px;width:132.7px;height:16px;background:#303030;border:1px solid #555555;border-radius:1px"></div>
<div class="a" style="left:652px;top:353.9px;width:168px;height:13.9px;background:#1d1d1d;"></div>
<div class="a" style="left:702px;top:376.2px;width:22.5px;height:12.4px;background:#cccccc;border-radius:6.2px"></div>
<div class="a" style="left:712px;top:375.6px;width:12.8px;height:12.8px;background:#2196f3;border-radius:50%"></div>
<div class="a" style="left:658.3px;top:409.2px;width:132.7px;height:16.2px;background:#303030;border:1px solid #555555;border-radius:1px"></div>
<svg style="left:783.5px;top:415px" width="4" height="4" viewBox="0 0 4 4"><path d="M0 0 H4 L2 3.6Z" fill="#eee"/></svg>
<svg style="left:796px;top:160.5px" width="8.5" height="8" viewBox="0 0 9 9"><path d="M3.8 5.2 L5.2 3.8 M4.6 2.4 L5.8 1.2 C6.6 0.4 7.8 0.4 8.2 0.8 C8.6 1.2 8.6 2.4 7.8 3.2 L6.6 4.4 M4.4 6.6 L3.2 7.8 C2.4 8.6 1.2 8.6 0.8 8.2 C0.4 7.8 0.4 6.6 1.2 5.8 L2.4 4.6" fill="none" stroke="#ccc" stroke-width="1"/></svg>
<svg style="left:796px;top:197.5px" width="8.5" height="8" viewBox="0 0 9 9"><path d="M3.8 5.2 L5.2 3.8 M4.6 2.4 L5.8 1.2 C6.6 0.4 7.8 0.4 8.2 0.8 C8.6 1.2 8.6 2.4 7.8 3.2 L6.6 4.4 M4.4 6.6 L3.2 7.8 C2.4 8.6 1.2 8.6 0.8 8.2 C0.4 7.8 0.4 6.6 1.2 5.8 L2.4 4.6" fill="none" stroke="#ccc" stroke-width="1"/></svg>
<svg style="left:796px;top:377.6px" width="8.5" height="8" viewBox="0 0 9 9"><path d="M3.8 5.2 L5.2 3.8 M4.6 2.4 L5.8 1.2 C6.6 0.4 7.8 0.4 8.2 0.8 C8.6 1.2 8.6 2.4 7.8 3.2 L6.6 4.4 M4.4 6.6 L3.2 7.8 C2.4 8.6 1.2 8.6 0.8 8.2 C0.4 7.8 0.4 6.6 1.2 5.8 L2.4 4.6" fill="none" stroke="#ccc" stroke-width="1"/></svg>
<div class="t" style="left:38.99px;top:10.88px;font-size:9.19px;color:#8a8a8a;font-weight:400;transform:scaleX(0.824);">Project:</div>
<div class="t" style="left:67.65px;top:10.88px;font-size:9.19px;color:#dcdcdc;font-weight:400;transform:scaleX(0.986);">howtos</div>
<div class="t" style="left:195.67px;top:9.59px;font-size:9.42px;color:#eeeeee;font-weight:400;transform:scaleX(0.854);">demoprefab</div>
<div class="t" style="left:381.22px;top:18.90px;font-size:5.89px;color:#8a8a8a;font-weight:400;transform:scaleX(1.021);">Preview</div>
<div class="t" style="left:421.32px;top:18.90px;font-size:5.89px;color:#8a8a8a;font-weight:400;transform:scaleX(1.007);">Deploy</div>
<div class="t" style="left:493.38px;top:18.90px;font-size:5.89px;color:#8a8a8a;font-weight:400;transform:scaleX(1.096);">Tutorials</div>
<div class="t" style="left:658.01px;top:18.90px;font-size:5.89px;color:#8a8a8a;font-weight:400;transform:scaleX(1.029);">Security</div>
<div class="t" style="left:686.52px;top:18.90px;font-size:5.89px;color:#8a8a8a;font-weight:400;transform:scaleX(1.061);">Export</div>
<div class="t" style="left:716.40px;top:18.90px;font-size:5.89px;color:#8a8a8a;font-weight:400;transform:scaleX(1.115);">I18N</div>
<div class="t" style="left:745.05px;top:18.90px;font-size:5.89px;color:#8a8a8a;font-weight:400;transform:scaleX(0.976);">VCS</div>
<div class="t" style="left:768.35px;top:18.90px;font-size:5.89px;color:#8a8a8a;font-weight:400;transform:scaleX(1.073);">Settings</div>
<div class="t" style="left:801.12px;top:11.68px;font-size:8.14px;color:#ffffff;font-weight:700;transform:scaleX(0.925);">JS</div>
<div class="t" style="left:8.17px;top:48.83px;font-size:5.38px;color:#ffffff;font-weight:700;transform:scaleX(1.097);">Pages</div>
<div class="t" style="left:2.72px;top:79.78px;font-size:6.14px;color:#9c9c9c;font-weight:400;transform:scaleX(0.979);">Databases</div>
<div class="t" style="left:10.26px;top:108.68px;font-size:6.14px;color:#9c9c9c;font-weight:400;transform:scaleX(1.064);">Web</div>
<div class="t" style="left:4.98px;top:114.96px;font-size:6.40px;color:#9c9c9c;font-weight:400;transform:scaleX(0.952);">Services</div>
<div class="t" style="left:11.10px;top:140.84px;font-size:6.66px;color:#9c9c9c;font-weight:400;transform:scaleX(0.874);">Java</div>
<div class="t" style="left:4.98px;top:146.86px;font-size:6.40px;color:#9c9c9c;font-weight:400;transform:scaleX(0.952);">Services</div>
<div class="t" style="left:10.32px;top:175.76px;font-size:6.40px;color:#9c9c9c;font-weight:400;transform:scaleX(0.909);">APIs</div>
<div class="t" style="left:11.24px;top:385.88px;font-size:6.14px;color:#9c9c9c;font-weight:400;transform:scaleX(1.130);">File</div>
<div class="t" style="left:5.44px;top:392.82px;font-size:6.91px;color:#9c9c9c;font-weight:400;transform:scaleX(0.896);">Explorer</div>
<div class="t" style="left:9.48px;top:421.52px;font-size:6.91px;color:#9c9c9c;font-weight:400;transform:scaleX(0.903);">Logs</div>
<div class="t" style="left:182.24px;top:35.75px;font-size:8.42px;color:#ffffff;font-weight:400;transform:scaleX(0.945);-webkit-text-stroke:0.35px #fff">Design</div>
<div class="t" style="left:221.83px;top:35.75px;font-size:8.42px;color:#aaaaaa;font-weight:400;transform:scaleX(0.968);">Markup</div>
<div class="t" style="left:262.62px;top:35.75px;font-size:8.42px;color:#aaaaaa;font-weight:400;transform:scaleX(0.980);">Script</div>
<div class="t" style="left:297.80px;top:35.75px;font-size:8.42px;color:#aaaaaa;font-weight:400;transform:scaleX(0.937);">Style</div>
<div class="t" style="left:409.99px;top:35.86px;font-size:8.99px;color:#999999;font-weight:400;transform:scaleX(0.803);">Variables</div>
<div class="t" style="left:461.19px;top:35.86px;font-size:8.41px;color:#eeeeee;font-weight:400;transform:scaleX(0.784);">Laptop with MDPI Screen</div>
<div class="t" style="left:51.19px;top:33.66px;font-size:11.46px;color:#cfcfcf;font-weight:400;transform:scaleX(0.731);">Pages</div>
<div class="t" style="left:51.36px;top:55.50px;font-size:10.00px;color:#cfcfcf;font-weight:400;transform:scaleX(0.849);">Widgets</div>
<div class="t" style="left:51.00px;top:76.94px;font-size:9.60px;color:#ffffff;font-weight:400;transform:scaleX(0.886);-webkit-text-stroke:0.4px #fff">Prefabs</div>
<div class="t" style="left:54.39px;top:103.55px;font-size:7.83px;color:#858585;font-weight:400;transform:scaleX(0.809);">Search...</div>
<div class="t" style="left:40.05px;top:128.59px;font-size:7.54px;color:#eeeeee;font-weight:400;transform:scaleX(0.983);-webkit-text-stroke:0.35px #eee">Basic</div>
<div class="t" style="left:41.62px;top:182.66px;font-size:6.05px;color:#b0b0b0;font-weight:400;transform:scaleX(1.196);">PrefabDemo</div>
<div class="t" style="left:103.90px;top:182.66px;font-size:6.05px;color:#b0b0b0;font-weight:400;transform:scaleX(1.143);">QRCode</div>
<div class="t" style="left:40.48px;top:203.75px;font-size:7.83px;color:#eeeeee;font-weight:400;transform:scaleX(0.898);-webkit-text-stroke:0.35px #eee">Oauth</div>
<div class="t" style="left:46.12px;top:257.64px;font-size:7.49px;color:#b0b0b0;font-weight:400;transform:scaleX(0.958);">Facebook</div>
<div class="t" style="left:105.60px;top:257.64px;font-size:7.49px;color:#b0b0b0;font-weight:400;transform:scaleX(0.963);">Google</div>
<div class="t" style="left:47.36px;top:308.84px;font-size:7.49px;color:#b0b0b0;font-weight:400;transform:scaleX(0.989);">LinkedIn</div>
<div class="t" style="left:110.64px;top:308.84px;font-size:7.49px;color:#b0b0b0;font-weight:400;transform:scaleX(0.990);">Box</div>
<div class="t" style="left:45.02px;top:359.61px;font-size:6.34px;color:#b0b0b0;font-weight:400;transform:scaleX(1.191);">Instagram</div>
<div class="t" style="left:39.92px;top:380.54px;font-size:8.07px;color:#eeeeee;font-weight:400;transform:scaleX(0.922);-webkit-text-stroke:0.35px #eee">Location</div>
<div class="t" style="left:50.70px;top:421.75px;font-size:8.29px;color:#cfcfcf;font-weight:400;transform:scaleX(1.015);">Page Structure</div>
<div class="t" style="left:51.46px;top:442.59px;font-size:9.42px;color:#cfcfcf;font-weight:400;transform:scaleX(0.915);">Variables</div>
<div class="t" style="left:184.61px;top:73.55px;font-size:8.77px;color:#3d3d3d;font-weight:400;transform:scaleX(0.894);-webkit-text-stroke:0.3px #3d3d3d">Enter Text</div>
<div class="t" style="left:251.42px;top:79.61px;font-size:8.70px;color:#9a9a9a;font-weight:400;transform:scaleX(0.916);">Enter text</div>
<div class="t" style="left:184.66px;top:112.73px;font-size:7.14px;color:#3d3d3d;font-weight:400;transform:scaleX(1.082);-webkit-text-stroke:0.3px #3d3d3d">Re-enter Text</div>
<div class="t" style="left:251.48px;top:117.69px;font-size:8.84px;color:#9a9a9a;font-weight:400;transform:scaleX(0.908);">Enter text</div>
<div class="t" style="left:198.16px;top:151.83px;font-size:8.44px;color:#555555;font-weight:400;transform:scaleX(0.808);">COMPARE</div>
<div class="t" style="left:431.55px;top:147.97px;font-size:7.68px;color:#666666;font-weight:400;transform:scaleX(1.035);">Label</div>
<div class="t" style="left:438.76px;top:65.63px;font-size:6.67px;color:#ffffff;font-weight:700;transform:scaleX(0.773);">PrefabDemo1</div>
<div class="t" style="left:176.32px;top:448.72px;font-size:7.97px;color:#cfcfcf;font-weight:400;transform:scaleX(0.924);">page1</div>
<div class="t" style="left:213.56px;top:448.72px;font-size:7.97px;color:#cfcfcf;font-weight:400;transform:scaleX(0.921);">content1</div>
<div class="t" style="left:257.55px;top:448.72px;font-size:7.97px;color:#cfcfcf;font-weight:400;transform:scaleX(0.900);">page_content1</div>
<div class="t" style="left:321.43px;top:448.72px;font-size:7.97px;color:#cfcfcf;font-weight:400;transform:scaleX(0.935);">layoutgrid1</div>
<div class="t" style="left:373.38px;top:448.72px;font-size:7.97px;color:#cfcfcf;font-weight:400;transform:scaleX(0.939);">gridrow1</div>
<div class="t" style="left:418.63px;top:448.72px;font-size:7.97px;color:#cfcfcf;font-weight:400;transform:scaleX(0.933);">gridcolumn2</div>
<div class="t" style="left:474.38px;top:448.72px;font-size:7.97px;color:#2196f3;font-weight:400;transform:scaleX(0.904);">PrefabDemo1</div>
<div class="t" style="left:658.80px;top:36.90px;font-size:8.35px;color:#dddddd;font-weight:400;transform:scaleX(1.004);">wm-prefab: PrefabDemo1</div>
<div class="t" style="left:671.86px;top:84.69px;font-size:6.96px;color:#7a7a7a;font-weight:400;transform:scaleX(0.941);">Search...</div>
<div class="t" style="left:657.84px;top:107.78px;font-size:7.20px;color:#e6e6e6;font-weight:400;transform:scaleX(0.937);">Name</div>
<div class="t" style="left:663.97px;top:123.66px;font-size:8.99px;color:#eeeeee;font-weight:400;transform:scaleX(0.749);">PrefabDemo1</div>
<div class="t" style="left:657.28px;top:144.89px;font-size:7.78px;color:#e6e6e6;font-weight:400;transform:scaleX(0.854);">String 1</div>
<div class="t" style="left:657.29px;top:181.79px;font-size:7.78px;color:#e6e6e6;font-weight:400;transform:scaleX(0.850);">String 2</div>
<div class="t" style="left:657.37px;top:219.88px;font-size:7.20px;color:#e6e6e6;font-weight:400;transform:scaleX(0.902);">Result</div>
<div class="t" style="left:657.63px;top:259.97px;font-size:8.86px;color:#e6e6e6;font-weight:400;transform:scaleX(0.886);">Layout</div>
<div class="t" style="left:657.43px;top:280.82px;font-size:6.91px;color:#e6e6e6;font-weight:400;transform:scaleX(0.987);">Width</div>
<div class="t" style="left:657.27px;top:316.89px;font-size:7.78px;color:#e6e6e6;font-weight:400;transform:scaleX(0.870);">Height</div>
<div class="t" style="left:657.81px;top:356.59px;font-size:7.54px;color:#e6e6e6;font-weight:400;transform:scaleX(1.032);">Behavior</div>
<div class="t" style="left:657.39px;top:376.58px;font-size:7.20px;color:#e6e6e6;font-weight:400;transform:scaleX(0.904);">Show</div>
<div class="t" style="left:657.43px;top:397.58px;font-size:7.20px;color:#e6e6e6;font-weight:400;transform:scaleX(0.951);">Animation</div>
</body></html>
